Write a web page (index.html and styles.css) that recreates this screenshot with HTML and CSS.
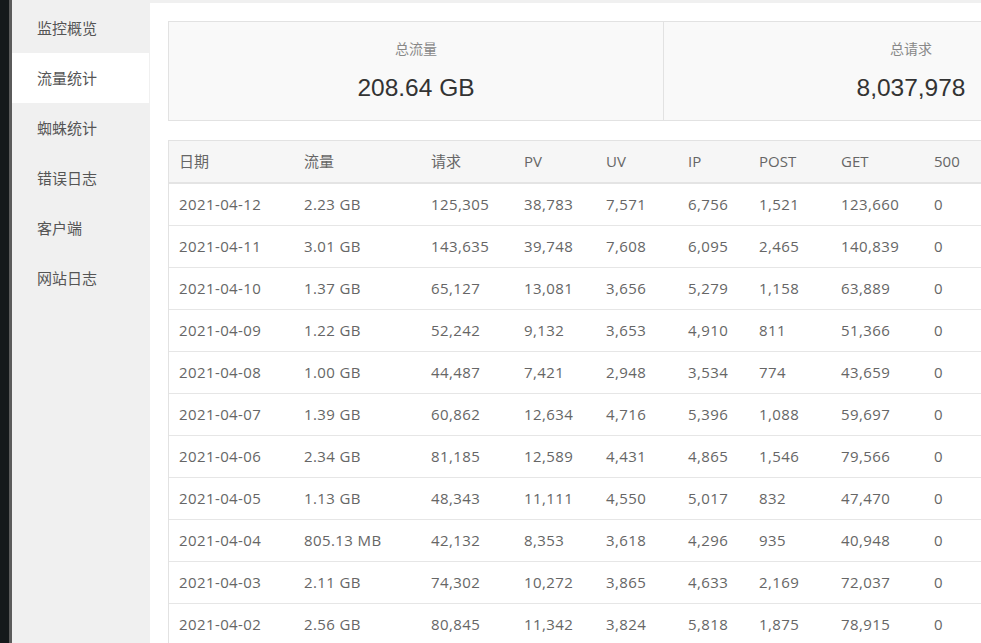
FILE: index.html
```html
<!DOCTYPE html>
<html lang="zh-CN">
<head>
<meta charset="utf-8">
<title>流量统计</title>
<link rel="stylesheet" href="styles.css">
</head>
<body>
<div class="app">
  <div class="edge-dark"></div>
  <div class="edge-gray"></div>
  <nav class="sidebar">
    <div class="nav-item">监控概览</div>
    <div class="nav-item active">流量统计</div>
    <div class="nav-item">蜘蛛统计</div>
    <div class="nav-item">错误日志</div>
    <div class="nav-item">客户端</div>
    <div class="nav-item">网站日志</div>
  </nav>
  <main class="main">
    <div class="stats">
      <div class="stat">
        <div class="stat-label">总流量</div>
        <div class="stat-value">208.64 GB</div>
      </div>
      <div class="stat">
        <div class="stat-label">总请求</div>
        <div class="stat-value">8,037,978</div>
      </div>
      <div class="stat">
        <div class="stat-label">总PV</div>
        <div class="stat-value">1,024,512</div>
      </div>
    </div>
    <table class="data">
      <colgroup>
        <col class="c1"><col class="c2"><col class="c3"><col class="c4"><col class="c5"><col class="c6"><col class="c7"><col class="c8"><col class="c9">
      </colgroup>
      <thead>
        <tr><th>日期</th><th>流量</th><th>请求</th><th>PV</th><th>UV</th><th>IP</th><th>POST</th><th>GET</th><th>500</th></tr>
      </thead>
      <tbody>
        <tr><td>2021-04-12</td><td>2.23 GB</td><td>125,305</td><td>38,783</td><td>7,571</td><td>6,756</td><td>1,521</td><td>123,660</td><td>0</td></tr>
        <tr><td>2021-04-11</td><td>3.01 GB</td><td>143,635</td><td>39,748</td><td>7,608</td><td>6,095</td><td>2,465</td><td>140,839</td><td>0</td></tr>
        <tr><td>2021-04-10</td><td>1.37 GB</td><td>65,127</td><td>13,081</td><td>3,656</td><td>5,279</td><td>1,158</td><td>63,889</td><td>0</td></tr>
        <tr><td>2021-04-09</td><td>1.22 GB</td><td>52,242</td><td>9,132</td><td>3,653</td><td>4,910</td><td>811</td><td>51,366</td><td>0</td></tr>
        <tr><td>2021-04-08</td><td>1.00 GB</td><td>44,487</td><td>7,421</td><td>2,948</td><td>3,534</td><td>774</td><td>43,659</td><td>0</td></tr>
        <tr><td>2021-04-07</td><td>1.39 GB</td><td>60,862</td><td>12,634</td><td>4,716</td><td>5,396</td><td>1,088</td><td>59,697</td><td>0</td></tr>
        <tr><td>2021-04-06</td><td>2.34 GB</td><td>81,185</td><td>12,589</td><td>4,431</td><td>4,865</td><td>1,546</td><td>79,566</td><td>0</td></tr>
        <tr><td>2021-04-05</td><td>1.13 GB</td><td>48,343</td><td>11,111</td><td>4,550</td><td>5,017</td><td>832</td><td>47,470</td><td>0</td></tr>
        <tr><td>2021-04-04</td><td>805.13 MB</td><td>42,132</td><td>8,353</td><td>3,618</td><td>4,296</td><td>935</td><td>40,948</td><td>0</td></tr>
        <tr><td>2021-04-03</td><td>2.11 GB</td><td>74,302</td><td>10,272</td><td>3,865</td><td>4,633</td><td>2,169</td><td>72,037</td><td>0</td></tr>
        <tr><td>2021-04-02</td><td>2.56 GB</td><td>80,845</td><td>11,342</td><td>3,824</td><td>5,818</td><td>1,875</td><td>78,915</td><td>0</td></tr>
        <tr><td>2021-04-01</td><td>2.02 GB</td><td>71,530</td><td>10,904</td><td>3,702</td><td>5,120</td><td>1,460</td><td>70,011</td><td>0</td></tr>
      </tbody>
    </table>
  </main>
</div>
</body>
</html>
```
FILE: styles.css
```css
html, body {
  margin: 0;
  padding: 0;
  height: 100%;
  overflow: hidden;
  background: #f0f0f0;
}
body {
  font-family: "Open Sans", "Noto Sans CJK SC", sans-serif;
  font-size: 15px;
  color: #666;
}
.app {
  display: flex;
  height: 100%;
}
.edge-dark {
  flex: 0 0 9px;
  background: #15191b;
}
.edge-gray {
  flex: 0 0 3px;
  background: #5b5b5b;
}
.sidebar {
  flex: 0 0 138px;
  background: #f0f0f0;
  padding-top: 3px;
  box-sizing: border-box;
}
.nav-item {
  height: 50px;
  line-height: 50px;
  padding-left: 25px;
  margin-right: 1px;
  color: #555;
  font-size: 15px;
  font-family: "Noto Sans CJK SC", sans-serif;
}
.nav-item.active {
  background: #fff;
}
.main {
  flex: 1 1 auto;
  min-width: 0;
  margin-top: 3px;
  background: #fff;
  padding: 18px 0 0 18px;
  overflow: hidden;
}
.stats {
  display: flex;
  width: max-content;
  border: 1px solid #e2e2e2;
  background: #f9f9f9;
}
.stat {
  width: 494px;
  border-right: 1px solid #e2e2e2;
  text-align: center;
  padding: 16px 0 17px;
}
.stat-label {
  font-family: "Noto Sans CJK SC", sans-serif;
  font-size: 14px;
  line-height: 20px;
  color: #888;
}
.stat-value {
  margin-top: 15px;
  font-family: "Liberation Sans", Arial, sans-serif;
  font-size: 24.5px;
  line-height: 30px;
  color: #333;
}
.data {
  margin-top: 19px;
  border-collapse: separate;
  border-spacing: 0;
  table-layout: fixed;
  width: 1020px;
  border: 1px solid #e2e2e2;
  border-bottom: 0;
}
.c1 { width: 125px; }
.c2 { width: 127px; }
.c3 { width: 93px; }
.c4 { width: 82px; }
.c5 { width: 82px; }
.c6 { width: 71px; }
.c7 { width: 82px; }
.c8 { width: 93px; }
.c9 { width: 285px; }
.data th, .data td {
  text-align: left;
  padding: 0 0 0 10px;
  white-space: nowrap;
  color: #666;
  font-weight: normal;
}
.data th {
  background: #f6f6f6;
  line-height: 41px;
  border-bottom: 2px solid #e4e4e4;
}
.data td {
  line-height: 41px;
  border-bottom: 1px solid #e6e6e6;
  letter-spacing: 0.4px;
}
```
